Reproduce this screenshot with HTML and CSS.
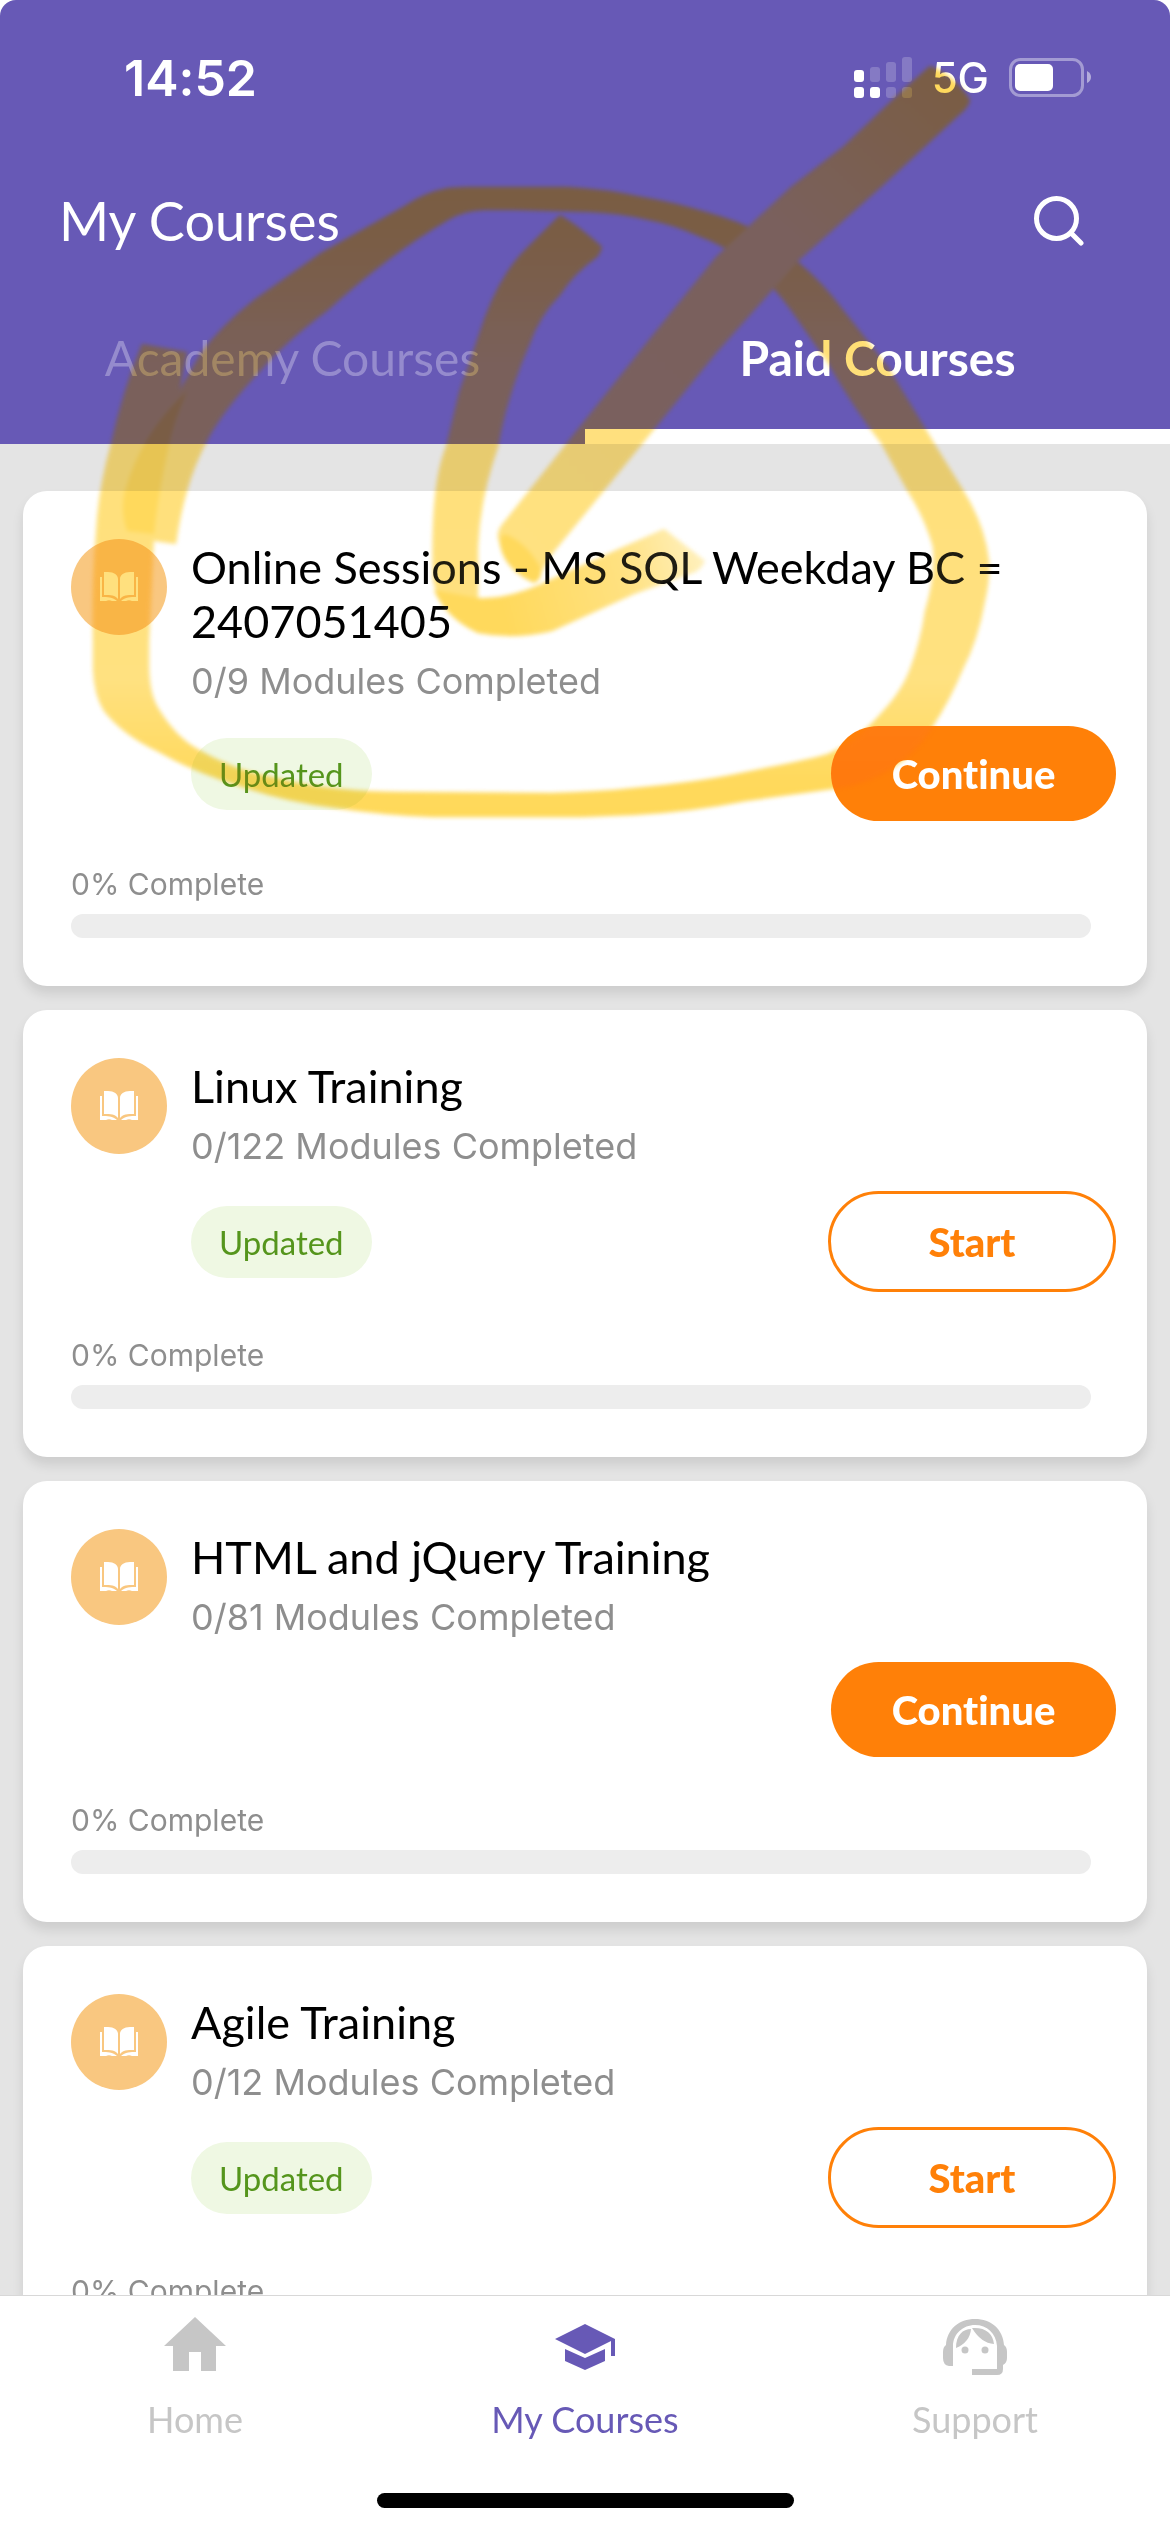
FILE: index.html
```html
<!DOCTYPE html>
<html lang="en">
<head>
<meta charset="utf-8">
<meta name="viewport" content="width=device-width, initial-scale=1">
<title>My Courses</title>
<link rel="stylesheet" href="styles.css">
</head>
<body>
<svg class="defs" width="0" height="0" aria-hidden="true">
  <symbol id="book" viewBox="0 0 38 30">
    <path d="M4 0h4c6 0 10 3 10 7v20c-3-4-7-4-14-4zM34 0h-4c-6 0-10 3-10 7v20c3-4 7-4 14-4z"/>
    <path d="M0 5h2v20c5 0 11 0 15 4H12c-2-1-4-1-6 0H0zM38 5h-2v20c-5 0-11 0-15 4h5c2-1 4-1 6 0h6z"/>
  </symbol>
  <linearGradient id="ink" gradientUnits="userSpaceOnUse" x1="0" y1="185" x2="0" y2="820">
    <stop offset="0" stop-color="#ffd95a"/><stop offset=".08" stop-color="#ffd95c"/><stop offset=".28" stop-color="#ffe079"/><stop offset=".78" stop-color="#ffe180"/><stop offset=".94" stop-color="#ffd95c"/><stop offset="1" stop-color="#ffd95a"/>
  </linearGradient>
  <linearGradient id="shaft" gradientUnits="userSpaceOnUse" x1="960" y1="80" x2="520" y2="560">
    <stop offset="0" stop-color="#ffd95a"/><stop offset=".35" stop-color="#ffe07c"/><stop offset="1" stop-color="#ffe180"/>
  </linearGradient>
  <linearGradient id="tip" gradientUnits="userSpaceOnUse" x1="500" y1="600" x2="700" y2="545">
    <stop offset="0" stop-color="#ffd95c"/><stop offset=".6" stop-color="#ffe180"/><stop offset="1" stop-color="#fff0bd"/>
  </linearGradient>
  <g id="marks">
    <path fill="url(#ink)" d="M142 344L187 352C180 390 172 425 168 450C160 485 157 510 154 534L149 641V669C150 690 153 700 160 711C170 727 183 742 201 751C225 765 250 773 276 778C315 788 360 792 403 792L552 793C580 792 608 791 634 788C675 784 710 780 746 772C780 765 808 760 828 754C845 746 857 738 869 726C889 706 902 690 910 669Q921 640 925 611Q936 575 933 547Q925 518 907 490L881 443Q855 410 828 363L791 310Q769 280 746 263Q724 245 701 237Q675 225 649 220Q620 213 590 212L515 210H485Q465 210 448 220Q417 238 388 260Q355 285 328 310Q285 342 261 370Q225 408 209 437Q194 465 187 491Q180 515 176 544L155 541L125 531V491Q145 455 165 415L201 353Q222 325 254 300L321 253L403 207Q425 192 448 188L465 187H567Q605 189 642 197Q677 203 709 213Q738 221 761 233Q783 247 799 263Q823 283 843 310L888 367L937 448L963 490Q985 525 989 561Q990 580 985 601Q978 640 963 669Q950 700 933 726Q900 780 832 789L746 801Q690 812 634 815L582 817H433Q382 815 336 808Q288 802 246 788Q195 773 157 751Q123 735 104 711Q94 695 93 669V641Q92 580 96 534Q98 490 111 444Q123 390 142 344Z"/>
    <path fill="#ffd95c" d="M187 391Q172 425 168 450Q158 495 154 534L127 531Q120 510 125 491Q140 435 187 391Z"/>
    <path fill="url(#ink)" d="M560 215Q580 227 602 247Q601 252 597 257Q574 273 560 295Q540 315 530 343Q507 395 498 447Q480 498 478 547V600Q478 622 474 630Q440 614 433 580Q430 485 446 447L459 393L485 317Q500 277 522 253Z"/>
    <path fill="url(#tip)" d="M434 590L478 598Q510 600 552 579L612 552L664 529L705 561Q701 569 695 572L634 594L552 631Q515 640 478 633Q446 618 434 590Z"/>
    <path fill="url(#shaft)" d="M930 66Q954 75 970 100Q968 108 960 114L881 187L799 260L716 353L642 444L552 554L540 574L531 581Q508 566 499 541Q495 532 505 521L567 443L649 340L716 257L791 187L843 147L903 90Z"/>
    <path fill="#ffd95c" d="M505 534Q525 542 539 565Q545 577 534 583Q505 570 500 545Q499 537 505 534Z"/>
  </g>
</svg>
<header class="header">
  <div class="status">
    <span class="time">14:52</span>
    <div class="status-icons">
      <svg width="58" height="42" viewBox="0 0 58 42" fill="#fff" aria-hidden="true">
        <rect y="13" width="10" height="12" rx="3"/><rect y="30" width="10" height="11" rx="3"/><rect x="16" y="30" width="10" height="11" rx="3"/>
        <g opacity=".2"><rect x="16" y="10" width="10" height="15" rx="3"/><rect x="32" y="5" width="10" height="20" rx="3"/><rect x="48" width="10" height="25" rx="3"/><rect x="32" y="30" width="10" height="11" rx="3"/><rect x="48" y="30" width="10" height="11" rx="3"/></g>
      </svg>
      <span class="network">5G</span>
      <svg width="82" height="40" viewBox="0 0 82 40" fill="#fff" aria-hidden="true">
        <rect x="1.5" y="1.5" width="72" height="36" rx="10" fill="none" stroke="#fff" stroke-width="3" opacity=".4"/><rect x="6" y="6" width="38" height="27" rx="5"/><path d="M78 13q4 2 4 6t-4 6z" opacity=".5"/>
      </svg>
    </div>
  </div>
  <div class="title-row">
    <h1>My Courses</h1>
    <button class="search" aria-label="Search"><svg width="50" height="50" viewBox="0 0 50 50" fill="none" stroke="#fff" stroke-width="5" stroke-linecap="round" aria-hidden="true"><circle cx="22.500" cy="22.500" r="20"/><path d="M37 37l10 10"/></svg></button>
  </div>
  <nav class="tabs">
    <a href="#academy">Academy Courses</a>
    <a href="#paid" class="active" aria-current="page">Paid Courses</a>
  </nav>
</header>
<main class="list">
  <article class="card">
    <div class="course">
      <span class="icon"><svg width="38" height="30"><use href="#book"/></svg></span>
      <div><h2>Online Sessions - MS SQL Weekday BC = 2407051405</h2><p class="modules">0/9 Modules Completed</p></div>
    </div>
    <div class="actions"><span class="badge">Updated</span><button class="btn solid">Continue</button></div>
    <p class="percent">0% Complete</p><div class="bar"></div>
  </article>
  <article class="card">
    <div class="course">
      <span class="icon"><svg width="38" height="30"><use href="#book"/></svg></span>
      <div><h2>Linux Training</h2><p class="modules">0/122 Modules Completed</p></div>
    </div>
    <div class="actions"><span class="badge">Updated</span><button class="btn outline">Start</button></div>
    <p class="percent">0% Complete</p><div class="bar"></div>
  </article>
  <article class="card">
    <div class="course">
      <span class="icon"><svg width="38" height="30"><use href="#book"/></svg></span>
      <div><h2>HTML and jQuery Training</h2><p class="modules">0/81 Modules Completed</p></div>
    </div>
    <div class="actions"><button class="btn solid">Continue</button></div>
    <p class="percent">0% Complete</p><div class="bar"></div>
  </article>
  <article class="card">
    <div class="course">
      <span class="icon"><svg width="38" height="30"><use href="#book"/></svg></span>
      <div><h2>Agile Training</h2><p class="modules">0/12 Modules Completed</p></div>
    </div>
    <div class="actions"><span class="badge">Updated</span><button class="btn outline">Start</button></div>
    <p class="percent">0% Complete</p><div class="bar"></div>
  </article>
</main>
<footer class="footer">
  <nav class="bottom-nav">
    <a href="#home"><svg width="62" height="62" viewBox="0 0 62 62" aria-hidden="true"><path d="M31 3L62 32H52V57H37V38H25V57H9V32H0z"/></svg>Home</a>
    <a href="#courses" class="active" aria-current="page"><svg width="62" height="62" viewBox="0 0 62 62" aria-hidden="true"><path d="M31 10L61 25V42H57V27L31 40L1 25zM11 35L31 44L51 35V47L31 56L11 47z"/></svg>My Courses</a>
    <a href="#support"><svg width="64" height="62" viewBox="0 0 64 62" aria-hidden="true"><path d="M3 31C4 15 16 5 32 5S60 15 61 31Q64 33 64 38V44Q64 49 60 51V55Q60 61 54 61H29V55H54V32C53 19 44 11 32 11S10 20 10 32V52H6Q0 51 0 44V38Q0 33 3 31z"/><path d="M13 34C13 21 20 15 28 15Q27 28 13 34zM29 14C42 13 50 19 51 30Q38 29 29 14z"/><circle cx="22" cy="36" r="3.500"/><circle cx="42" cy="36" r="3.500"/></svg>Support</a>
  </nav>
  <div class="home-indicator"></div>
</footer>
<svg class="marker" viewBox="0 0 1170 850" aria-hidden="true"><use href="#marks"/></svg>
<svg class="marker sheen" viewBox="0 0 1170 850" aria-hidden="true"><use href="#marks"/></svg>
</body>
</html>
```

FILE: styles.css
```css
* { box-sizing: border-box; margin: 0; padding: 0; }
html { background: #fff; }
body { position: relative; display: flex; flex-direction: column; height: 100vh; overflow: hidden; background: #fff; font-family: Lato, sans-serif; font-variant-ligatures: none; color: #000; }
.defs { position: absolute; }
a { text-decoration: none; color: inherit; }
button { font: inherit; border: 0; background: none; }
.header { flex: none; background: #6759b6; color: #fff; border-radius: 16px 16px 0 0; }
.status { display: flex; justify-content: space-between; align-items: center; padding: 48px 79px 0 124px; font-family: Inter, sans-serif; }
.time { font-size: 50px; line-height: 60px; font-weight: 600; }
.status-icons { display: flex; align-items: center; gap: 20px; }
.network { font-size: 42px; line-height: 60px; font-weight: 500; }
.title-row { display: flex; justify-content: space-between; align-items: center; padding: 78px 86px 0 59px; }
h1 { font-size: 54px; line-height: 70px; font-weight: 400; }
.search { display: flex; }
.tabs { display: grid; grid-template-columns: 1fr 1fr; padding-top: 58px; }
.tabs a { height: 130px; padding-top: 15px; font-size: 48px; line-height: 58px; text-align: center; color: #958bcd; }
.tabs .active { color: #fff; font-weight: 700; border-bottom: 15px solid #fff; }
.list { flex: 1; min-height: 0; overflow: hidden; display: flex; flex-direction: column; gap: 24px; padding: 47px 23px 0; background: #e4e4e4; }
.card { flex: none; padding: 48px; background: #fff; border-radius: 24px; box-shadow: 0 8px 12px rgba(0, 0, 0, .1); }
.course { display: flex; gap: 24px; }
.icon { flex: none; display: grid; place-items: center; width: 96px; height: 96px; border-radius: 50%; background: #f9c780; fill: #fff; }
h2 { padding-top: 1px; font-size: 45px; line-height: 54px; font-weight: 400; }
.modules { font-family: Inter, sans-serif; font-size: 36px; line-height: 44px; padding-top: 11px; color: #8e8e8e; }
.actions { display: flex; align-items: center; margin: 23px -17px 0 120px; }
.badge { padding: 0 28px; border-radius: 36px; background: #eff8e3; color: #55951c; font-size: 33px; line-height: 72px; }
.btn { margin-left: auto; border-radius: 51px; font-size: 40px; font-weight: 900; }
.solid { width: 285px; height: 95px; background: #ff8008; color: #fff; }
.outline { width: 288px; height: 101px; border: 3px solid #ff8008; color: #ff8008; }
.percent { padding-top: 44px; font-family: Inter, sans-serif; font-size: 30px; line-height: 38px; color: #8e8e8e; }
.bar { height: 24px; margin: 11px 8px 0 0; border-radius: 12px; background: #ededed; }
.footer { flex: none; background: #fff; border-top: 1px solid #d8d8d8; }
.bottom-nav { display: grid; grid-template-columns: repeat(3, 1fr); padding-top: 18px; }
.bottom-nav a { display: flex; flex-direction: column; align-items: center; gap: 21px; font-size: 36px; line-height: 44px; color: #c6c6c6; fill: currentColor; }
.bottom-nav .active { color: #6759b6; }
.home-indicator { width: 417px; height: 15px; margin: 52px auto 24px; border-radius: 8px; background: #000; }
/* Highlighter drawn over the page: tints what is below it, plus a thin sheen on dark areas */
.marker { position: absolute; top: 0; left: 0; width: 100%; pointer-events: none; mix-blend-mode: multiply; filter: blur(2px); }
.sheen { mix-blend-mode: normal; opacity: .12; }
```
